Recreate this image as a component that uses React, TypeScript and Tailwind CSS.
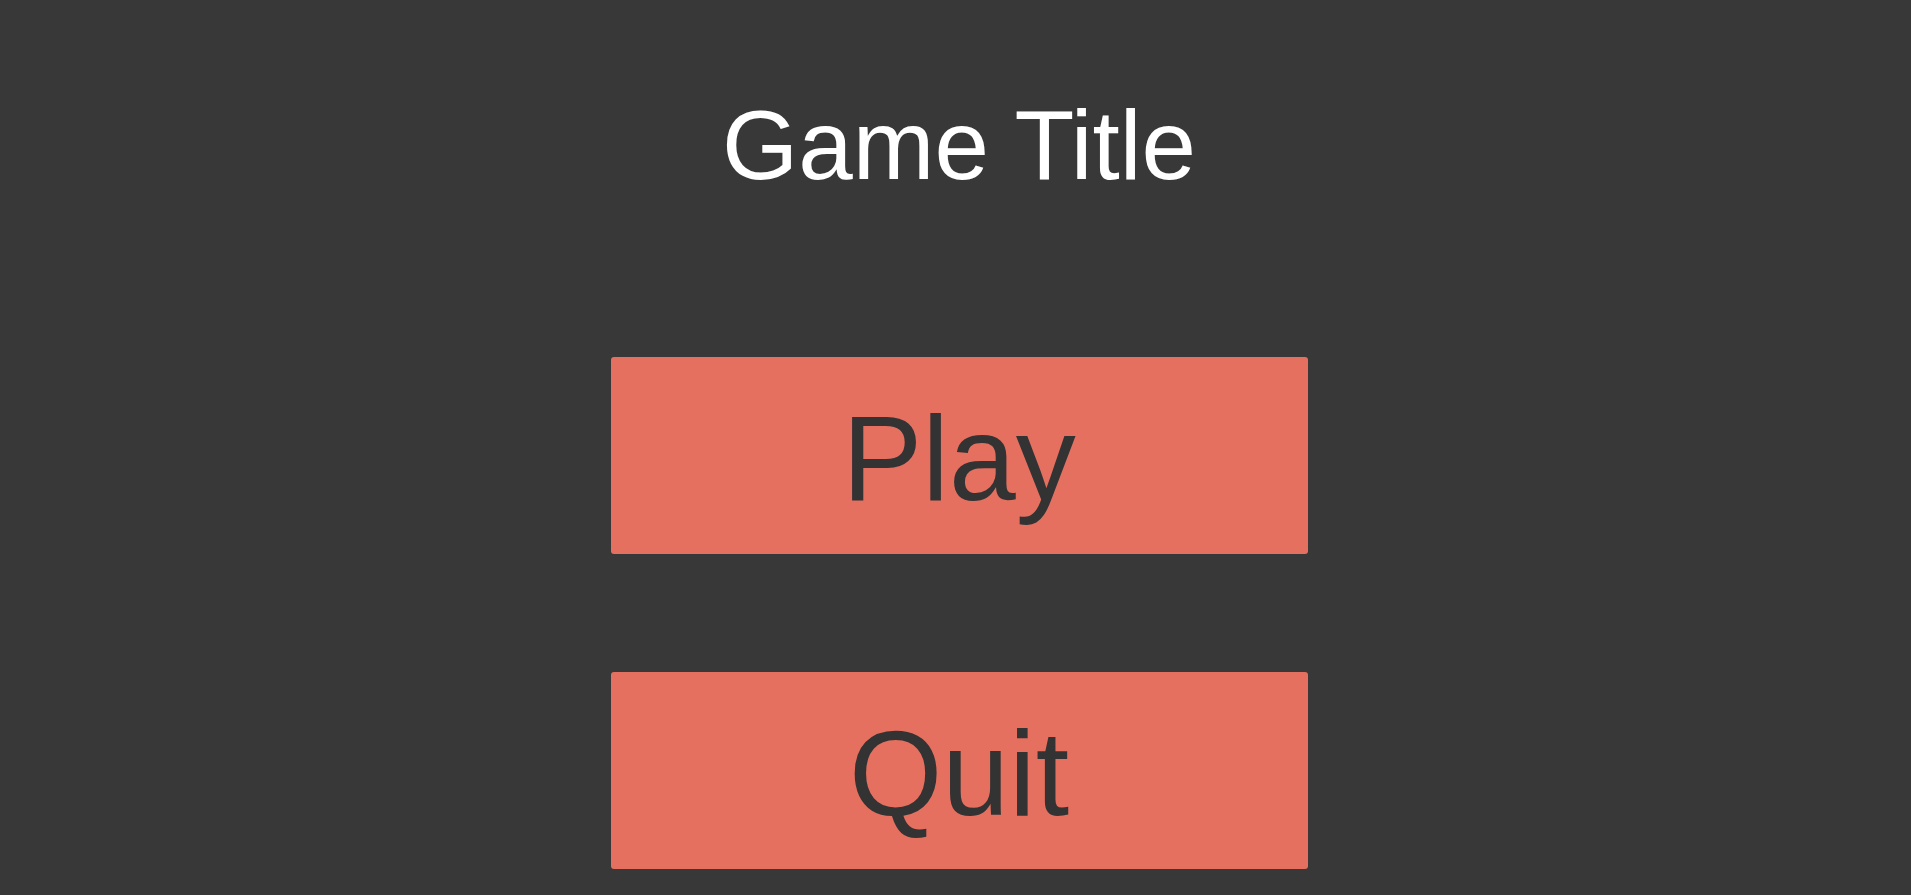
export default function App() {
  return (
    <div
      className="w-[1911px] h-[895px] bg-[#383838] flex flex-col items-center overflow-hidden pl-[7px]"
      style={{ fontFamily: '"Liberation Sans", Arial, sans-serif' }}
    >
      <h1 className="mt-[96px] text-white text-[98px] leading-none font-normal">Game Title</h1>
      <button className="mt-[163px] w-[697px] h-[197px] rounded-[3px] bg-[#e57060] text-[#333333] text-[120px] leading-none pt-[4px] flex items-center justify-center">
        Play
      </button>
      <button className="mt-[118px] w-[697px] h-[197px] rounded-[3px] bg-[#e57060] text-[#333333] text-[120px] leading-none pt-[4px] flex items-center justify-center">
        Quit
      </button>
    </div>
  );
}
